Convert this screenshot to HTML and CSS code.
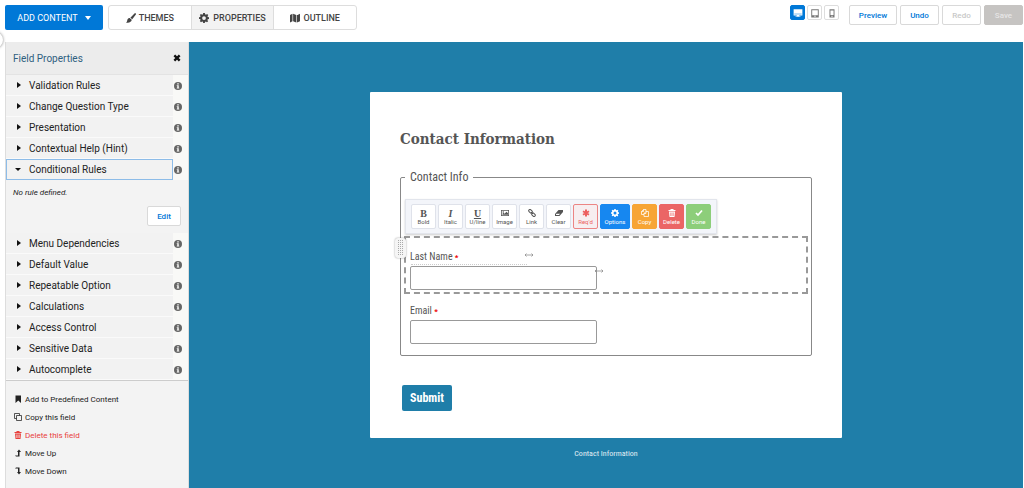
FILE: index.html
```
<!DOCTYPE html>
<html lang="en">
<head>
    <meta charset="UTF-8">
    <meta name="viewport" content="width=device-width, initial-scale=1.0">
    <title>Form Builder</title>
    <link rel="stylesheet" href="styles.css">
</head>
<body>

    <!-- Shared icons -->
    <svg class="sprite" aria-hidden="true">
        <symbol id="info" viewBox="0 0 16 16"><circle cx="8" cy="8" r="8" fill="currentColor"/><path d="M6.500 2.500h3v2.500h-3zM5.500 6.500h4v5h1v1.500h-5v-1.500h1v-3.500h-1z" fill="#f8f8f6"/></symbol>
        <symbol id="gear" viewBox="0 0 16 16"><path fill-rule="evenodd" fill="currentColor" d="M6.6 0h2.8l.4 2 1.4.6L12.900 1.400l1.900 1.900-1.200 1.700.6 1.400 1.800.3v2.800l-2 .4-.6 1.400 1.200 1.700-1.900 1.900-1.700-1.200-1.400.6-.3 1.700H6.600l-.3-1.900-1.400-.6-1.700 1.200-1.900-1.900 1.200-1.700-.6-1.400L0 9.400V6.600l1.900-.3.6-1.400-1.200-1.600 1.900-1.900 1.700 1.200 1.400-.6zM8 5a3 3 0 1 0 0 6 3 3 0 0 0 0-6z"/></symbol>
        <symbol id="trash" viewBox="0 0 16 16"><path fill="currentColor" fill-rule="evenodd" d="M5.500 0h5l1 2H15v2H1V2h3.500zM2 5h12l-1 11H3zm3 2v7h1.200V7zm2.400 0v7h1.200V7zm2.400 0v7H11V7z"/></symbol>
        <symbol id="resize" viewBox="0 0 20 8"><path fill="none" stroke="currentColor" stroke-width="1.500" d="M2 4h16M5 1 2 4l3 3M15 1l3 3-3 3"/></symbol>
    </svg>

    <span class="edge-knob"></span>

    <header class="topbar">
        <button type="button" class="add-content">ADD CONTENT <span class="caret"></span></button>
        <nav class="tabs">
            <button type="button" class="tab">
                <svg class="icon-md" viewBox="0 0 16 16"><path fill="currentColor" d="M15.500.5c.7.7.5 1.500 0 2.300L10 10 7 7.500 13.500.8c.7-.6 1.500-.8 2-.3zM6.200 8.200l3 2.700c-.2 3.300-4.500 5.600-9.200 4.300 2-.8 1.500-2.200 2.200-4.300.7-2 2.400-2.900 4-2.700z"/></svg>
                THEMES
            </button>
            <button type="button" class="tab active">
                <svg class="icon-md"><use href="#gear"/></svg>
                PROPERTIES
            </button>
            <button type="button" class="tab">
                <svg class="icon-md" viewBox="0 0 16 16"><path fill="currentColor" d="M0 3l4-2v12l-4 2zM5 1l5 2v12l-5-2zM11 3c2 0 3-1 5-2v12l-5 2z"/></svg>
                OUTLINE
            </button>
        </nav>
        <div class="devices">
            <button type="button" class="device selected" aria-label="Desktop">
                <svg class="icon-md" viewBox="0 0 16 16"><path fill="currentColor" fill-rule="evenodd" d="M1 2h14v10h-5v1h2v1H4v-1h2v-1H1zm1 7v1h12V9z"/></svg>
            </button>
            <button type="button" class="device" aria-label="Tablet">
                <svg class="icon-md" viewBox="0 0 16 16"><path fill="currentColor" fill-rule="evenodd" d="M2 2h12v13H2zm1.500 1.500v8h9v-8zM7 12.500v1.500h2v-1.500z"/></svg>
            </button>
            <button type="button" class="device" aria-label="Phone">
                <svg class="icon-md" viewBox="0 0 16 16"><path fill="currentColor" fill-rule="evenodd" d="M4 2h8v13H4zm1.500 2v7h5V4zM7 12.500v1.500h2v-1.500z"/></svg>
            </button>
        </div>
        <div class="actions">
            <button type="button" class="btn wide">Preview</button>
            <button type="button" class="btn">Undo</button>
            <button type="button" class="btn" disabled>Redo</button>
            <button type="button" class="btn save" disabled>Save</button>
        </div>
    </header>

    <main class="workspace">
        <aside class="sidebar">
            <div class="sidebar-head">
                <h2>Field Properties</h2>
                <button type="button" class="close" aria-label="Close">
                    <svg viewBox="0 0 12 12"><path stroke="currentColor" stroke-width="3.500" d="M2 2l8 8M10 2l-8 8"/></svg>
                </button>
            </div>

            <div class="rule"><button type="button" aria-expanded="false">Validation Rules</button><svg class="info"><use href="#info"/></svg></div>
            <div class="rule"><button type="button" aria-expanded="false">Change Question Type</button><svg class="info"><use href="#info"/></svg></div>
            <div class="rule"><button type="button" aria-expanded="false">Presentation</button><svg class="info"><use href="#info"/></svg></div>
            <div class="rule"><button type="button" aria-expanded="false">Contextual Help (Hint)</button><svg class="info"><use href="#info"/></svg></div>
            <div class="rule open"><button type="button" aria-expanded="true">Conditional Rules</button><svg class="info"><use href="#info"/></svg></div>
            <div class="rule-panel">
                <p>No rule defined.</p>
                <button type="button" class="btn edit">Edit</button>
            </div>
            <div class="rule"><button type="button" aria-expanded="false">Menu Dependencies</button><svg class="info"><use href="#info"/></svg></div>
            <div class="rule"><button type="button" aria-expanded="false">Default Value</button><svg class="info"><use href="#info"/></svg></div>
            <div class="rule"><button type="button" aria-expanded="false">Repeatable Option</button><svg class="info"><use href="#info"/></svg></div>
            <div class="rule"><button type="button" aria-expanded="false">Calculations</button><svg class="info"><use href="#info"/></svg></div>
            <div class="rule"><button type="button" aria-expanded="false">Access Control</button><svg class="info"><use href="#info"/></svg></div>
            <div class="rule"><button type="button" aria-expanded="false">Sensitive Data</button><svg class="info"><use href="#info"/></svg></div>
            <div class="rule"><button type="button" aria-expanded="false">Autocomplete</button><svg class="info"><use href="#info"/></svg></div>

            <ul class="field-actions">
                <li><a href="#"><svg viewBox="0 0 16 16"><path fill="currentColor" d="M3 1h11v15l-5.500-5L3 16z"/></svg>Add to Predefined Content</a></li>
                <li><a href="#"><svg viewBox="0 0 16 16"><path fill="none" stroke="currentColor" stroke-width="1.500" d="M5 5h10v10H5zM5 11H1V1h10v4"/></svg>Copy this field</a></li>
                <li><a href="#" class="danger"><svg><use href="#trash"/></svg>Delete this field</a></li>
                <li><a href="#"><svg viewBox="0 0 16 16"><path fill="currentColor" d="M10 1l4 5h-3v9H4l-2-2h6V6H6z"/></svg>Move Up</a></li>
                <li><a href="#"><svg viewBox="0 0 16 16"><path fill="currentColor" d="M10 15l4-5h-3V1H4L2 3h6v7H6z"/></svg>Move Down</a></li>
            </ul>
        </aside>

        <section class="canvas">
            <form class="form-card">
                <h1>Contact Information</h1>
                <fieldset>
                    <legend>Contact Info</legend>

                    <div class="toolbar">
                        <button type="button" class="tool"><b class="glyph">B</b>Bold</button>
                        <button type="button" class="tool"><i class="glyph">I</i>Italic</button>
                        <button type="button" class="tool"><u class="glyph">U</u>U/line</button>
                        <button type="button" class="tool"><svg viewBox="0 0 16 16"><path fill="currentColor" fill-rule="evenodd" d="M0 2h16v12H0zm1.500 1.500v9h13v-9z"/><circle cx="4.500" cy="6" r="1.500" fill="currentColor"/><path fill="currentColor" d="M3 11.500V9.500l2-2 2 2 4-4 3 3v3z"/></svg>Image</button>
                        <button type="button" class="tool"><svg viewBox="0 0 16 16"><g fill="none" stroke="currentColor" stroke-width="2"><rect x="1" y="2" width="8" height="5" rx="2.500" transform="rotate(45 5 4.500)"/><rect x="7" y="9" width="8" height="5" rx="2.500" transform="rotate(45 11 11.500)"/><path d="M6 6l4 4"/></g></svg>Link</button>
                        <button type="button" class="tool"><svg viewBox="0 0 16 16"><path fill="currentColor" fill-rule="evenodd" d="M7 2h9v4l-7 8H0v-4zM2 10.500V12h6l2-2.500H3z"/></svg>Clear</button>
                        <button type="button" class="tool required"><svg viewBox="0 0 16 16"><path stroke="currentColor" stroke-width="4" d="M8 1v14M2 4.500l12 7M14 4.500l-12 7"/></svg>Req'd</button>
                        <button type="button" class="tool options"><svg><use href="#gear"/></svg>Options</button>
                        <button type="button" class="tool copy"><svg viewBox="0 0 16 16"><path fill="none" stroke="currentColor" stroke-width="1.500" d="M6 11H1V5l4-4h5v4M5 1v4H1M10 5h5v10H6V9zM10 5v4H6"/></svg>Copy</button>
                        <button type="button" class="tool delete"><svg><use href="#trash"/></svg>Delete</button>
                        <button type="button" class="tool done"><svg viewBox="0 0 16 16"><path fill="none" stroke="currentColor" stroke-width="3.500" d="M2 8l4 4 8-9"/></svg>Done</button>
                    </div>

                    <div class="field editing">
                        <span class="drag-handle"></span>
                        <label for="last-name">Last Name <span class="star">*</span></label>
                        <span class="label-line"><svg class="resize"><use href="#resize"/></svg></span>
                        <div class="input-wrap">
                            <input type="text" id="last-name">
                            <svg class="resize"><use href="#resize"/></svg>
                        </div>
                    </div>

                    <div class="field">
                        <label for="email">Email <span class="star">*</span></label>
                        <div class="input-wrap">
                            <input type="text" id="email">
                        </div>
                    </div>
                </fieldset>
                <button type="button" class="submit">Submit</button>
            </form>
            <p class="caption">Contact Information</p>
        </section>
    </main>

</body>
</html>
```
FILE: styles.css
```
* {
    box-sizing: border-box;
}

body {
    display: flex;
    flex-direction: column;
    min-height: 100vh;
    margin: 0;
    background-color: #fff;
    color: #222;
    font-family: Roboto, sans-serif;
    font-size: 10px;
}

button {
    padding: 0;
    border: none;
    background: none;
    color: inherit;
    font-family: inherit;
    cursor: pointer;
}

svg {
    display: block;
    flex: none;
}

.sprite {
    position: absolute;
    width: 0;
    height: 0;
}

.edge-knob {
    position: absolute;
    top: 32px;
    left: -13px;
    width: 16px;
    height: 16px;
    border-radius: 50%;
    background-color: #fff;
    box-shadow: 0 0 3px rgba(0, 0, 0, 0.5);
}

.icon-md {
    width: 10px;
    height: 10px;
}

/* Top bar */
.topbar {
    display: flex;
    align-items: flex-start;
    padding: 5px 1px 12px 5px;
}

.add-content {
    display: flex;
    align-items: center;
    justify-content: center;
    gap: 7px;
    width: 98px;
    height: 25px;
    margin-right: 5px;
    border-radius: 2px;
    background-color: #0078d7;
    color: #fff;
    font-size: 9px;
}

.caret {
    border: 3px solid transparent;
    border-top: 4px solid #fff;
    border-bottom: none;
}

.tabs {
    display: flex;
    width: 249px;
    height: 25px;
    border: 1px solid #ddd;
    border-radius: 3px;
}

.tab {
    display: flex;
    flex: 1;
    align-items: center;
    justify-content: center;
    gap: 3px;
    color: #444;
    font-size: 9px;
    font-weight: 500;
}

.tab.active {
    gap: 4px;
    border-left: 1px solid #ddd;
    border-right: 1px solid #ddd;
    background-color: #f3f3f3;
}

.devices {
    display: flex;
    gap: 2px;
    margin-left: auto;
    margin-right: 10px;
}

.device {
    display: flex;
    align-items: center;
    justify-content: center;
    width: 15px;
    height: 15px;
    border: 1px solid #ddd;
    border-radius: 2px;
    color: #777;
}

.device.selected {
    border-color: #0078d7;
    background-color: #0078d7;
    color: #fff;
}

.actions {
    display: flex;
    gap: 3px;
}

.btn {
    width: 39px;
    height: 20px;
    border: 1px solid #d9d9d9;
    border-radius: 2px;
    background-color: #fff;
    color: #0078d7;
    font-size: 8px;
    font-weight: 500;
}

.btn.wide {
    width: 48px;
}

.btn:disabled {
    color: #c8c8c8;
}

.btn.save {
    border-color: #c6c4c2;
    background-color: #c6c4c2;
    color: #e6e6e6;
}

/* Sidebar */
.workspace {
    display: flex;
    flex: 1;
    padding: 0 1px 0 5px;
}

.sidebar {
    width: 184px;
    border-left: 1px solid #ddd;
    border-right: 1px solid #ddd;
    background-color: #f3f3f3;
}

.sidebar-head {
    display: flex;
    align-items: center;
    justify-content: space-between;
    height: 33px;
    padding: 0 7px;
    border-bottom: 1px solid #e3e3e3;
    background-color: #ececec;
}

.sidebar-head h2 {
    margin: 0;
    color: #2f5f7f;
    font-size: 10px;
    font-weight: 400;
}

.close svg {
    width: 8px;
    height: 8px;
    color: #111;
}

.rule {
    display: flex;
    align-items: center;
    height: 21px;
    background-color: #f9f9f7;
}

.rule button {
    display: flex;
    flex: 1;
    align-items: center;
    height: 21px;
    padding-left: 11px;
    border-bottom: 1px solid #fafafa;
    background-color: #f2f2f2;
    color: #222;
    font-size: 10px;
}

.rule button::before {
    content: "";
    margin-right: 8px;
    border: 3px solid transparent;
    border-left: 4px solid #111;
    border-right: none;
}

.rule.open button {
    padding-left: 8px;
    border: 1px solid #8dbce8;
}

.rule.open button::before {
    border: 3px solid transparent;
    border-top: 3px solid #111;
    border-bottom: none;
}

.info {
    width: 8px;
    height: 8px;
    margin: 0 6px 0 1px;
    color: #666;
}

.rule-panel {
    display: flex;
    flex-direction: column;
    height: 53px;
    padding: 7px 7px 0;
}

.rule-panel p {
    margin: 0;
    font-size: 8px;
    font-style: italic;
    line-height: 12px;
}

.btn.edit {
    width: 34px;
    margin-top: 7px;
    align-self: flex-end;
}

.field-actions {
    margin: 0;
    padding: 9px 8px;
    border-top: 1px solid #ccc;
    list-style: none;
    font-size: 8px;
}

.field-actions a {
    display: flex;
    align-items: center;
    gap: 3px;
    height: 18px;
    color: #222;
    text-decoration: none;
}

.field-actions svg {
    width: 8px;
    height: 8px;
}

.field-actions .danger {
    color: #e8403c;
}

/* Form preview */
.canvas {
    display: flex;
    flex: 1;
    flex-direction: column;
    align-items: center;
    padding: 50px 20px 20px;
    background-color: #1f7ea9;
    color: #555;
    font-family: "Roboto Condensed", "Liberation Sans Narrow", Roboto, sans-serif;
}

.form-card {
    width: 100%;
    max-width: 472px;
    padding: 35px 30px 27px;
    border-radius: 1px;
    background-color: #fff;
}

.form-card h1 {
    margin: 0 0 18px;
    font-family: "Roboto Slab", "DejaVu Serif Condensed", "DejaVu Serif", serif;
    font-size: 15px;
    line-height: 24px;
}

fieldset {
    min-width: 0;
    margin: 0;
    padding: 14px 3px 8px;
    border: 1px solid #888;
    border-radius: 2px;
}

legend {
    margin-left: 1px;
    padding: 0 5px;
    font-size: 12px;
    line-height: 16px;
}

.toolbar {
    display: flex;
    gap: 2px;
    width: fit-content;
    margin: 0 0 2px 1px;
    padding: 4px 5px;
    border: 1px solid #e2e5ec;
    background-color: #f3f5fa;
    box-shadow: 0 1px 2px rgba(0, 0, 0, 0.2);
}

.tool {
    display: flex;
    flex-direction: column;
    align-items: center;
    justify-content: center;
    width: 25px;
    height: 25px;
    border: 1px solid #dfe2ea;
    border-radius: 2px;
    background-color: #fff;
    color: #555;
    font-family: Roboto, sans-serif;
    font-size: 6px;
    line-height: 7px;
}

.tool svg {
    width: 8px;
    height: 8px;
    margin-bottom: 1px;
}

.glyph {
    font-family: "Liberation Serif", serif;
    font-size: 10px;
    font-weight: bold;
    line-height: 9px;
}

.tool.required {
    border-color: #ec8584;
    background-color: #f7eef0;
    color: #ec5f5f;
}

.tool.options {
    width: 30px;
    border-color: #1687f0;
    background-color: #1687f0;
    color: #fff;
}

.tool.copy {
    border-color: #f7a535;
    background-color: #f7a535;
    color: #fff;
}

.tool.delete {
    border-color: #eb6565;
    background-color: #eb6565;
    color: #fff;
}

.tool.done {
    border-color: #8dce7a;
    background-color: #8dce7a;
    color: #fff;
}

.field {
    position: relative;
    padding: 10px 6px 3px;
}

.field.editing {
    padding: 12px 4px 2px;
    border: 2px dashed #999;
}

.field label {
    display: block;
    font-size: 10px;
    line-height: 14px;
}

.star {
    color: #e00;
    font-size: 8px;
    font-weight: bold;
}

.input-wrap {
    position: relative;
    width: 187px;
    margin-top: 1px;
}

.input-wrap input {
    display: block;
    width: 100%;
    height: 24px;
    border: 1px solid #999;
    border-radius: 2px;
}

.label-line {
    position: absolute;
    top: 26px;
    left: 5px;
    width: 116px;
    border-top: 1px dotted #ccc;
}

.resize {
    position: absolute;
    width: 10px;
    height: 4px;
    color: #888;
}

.label-line .resize {
    top: -12px;
    right: -7px;
}

.input-wrap .resize {
    top: 3px;
    right: -7px;
}

.drag-handle {
    position: absolute;
    top: 0;
    left: -11px;
    width: 11px;
    height: 20px;
    border: 2px solid #f5f5f5;
    border-radius: 3px;
    background-color: #f5f5f5;
    background-image: conic-gradient(#aaa 90deg, transparent 90deg);
    background-size: 2px 2px;
    background-clip: padding-box;
    box-shadow: 0 0 2px rgba(0, 0, 0, 0.4);
}

.submit {
    width: 50px;
    height: 26px;
    margin: 29px 0 0 2px;
    border-radius: 2px;
    background-color: #1f7ea9;
    color: #fff;
    font-size: 12px;
    font-weight: bold;
}

.caption {
    margin: 10px 0 0;
    color: #e3eff5;
    font-size: 8px;
    line-height: 12px;
}
```
